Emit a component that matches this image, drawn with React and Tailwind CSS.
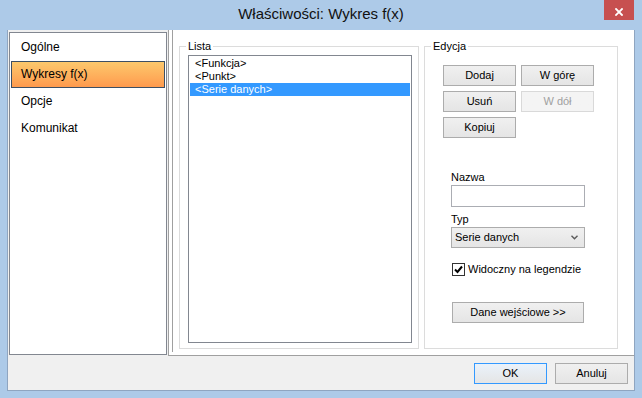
import React from "react";

const Btn = ({ children, className = "", disabled = false, focused = false }) => {
  let look = "border-[#acacac] from-[#f0f0f0] to-[#e5e5e5] text-black";
  if (disabled) look = "border-[#d9d9d9] from-[#f4f4f4] to-[#f4f4f4] text-[#a0a0a0]";
  if (focused) look = "border-[#3399ff] from-[#eaf2fb] to-[#e5e5e5] text-black";
  return (
    <div
      className={`flex h-[21px] w-[73px] items-center justify-center border bg-linear-to-b text-[11px] leading-[13px] ${look} ${className}`}
    >
      {children}
    </div>
  );
};

const menu = ["Ogólne", "Wykresy f(x)", "Opcje", "Komunikat"];
const series = ["<Funkcja>", "<Punkt>", "<Serie danych>"];

const App = () => {
  return (
    <div className="flex h-[398px] w-[642px] flex-col bg-[#adcae8] px-[7px] pb-[7px] font-['Liberation_Sans',Arial,sans-serif] text-black">
      {/* pasek tytułu */}
      <div className="grid h-[30px] grid-cols-[31px_1fr_31px]">
        <div />
        <div className="flex items-center justify-center pb-[1px] text-[15px] text-[#111]">Właściwości: Wykres f(x)</div>
        <div className="flex h-[20px] w-[30px] items-center justify-center bg-[#c75050] pt-[3px]">
          <svg width="8" height="8" viewBox="0 0 8 8">
            <path d="M1 1 L7 7 M7 1 L1 7" stroke="#fff" strokeWidth="1.8" strokeLinecap="square" />
          </svg>
        </div>
      </div>

      <div className="flex flex-1 flex-col border-x border-b border-[#8fa5c0] bg-[#f0f0f0]">
        <div className="flex h-[326px]">
          {/* menu po lewej */}
          <div className="ml-[1px] mt-[2px] flex h-[323px] w-[158px] flex-col border border-[#828790] bg-white p-[1px] text-[12px]">
            {menu.map((m, i) =>
              i === 1 ? (
                <div
                  key={m}
                  className="h-[27px] border border-[#3d4f63] bg-linear-to-b from-[#fcc86c] to-[#fe9a4e] pl-[9px] leading-[25px]"
                >
                  {m}
                </div>
              ) : (
                <div key={m} className="h-[27px] pl-[10px] leading-[27px]">
                  {m}
                </div>
              )
            )}
          </div>

          {/* panel po prawej */}
          <div className="ml-[1px] h-[326px] w-[466px] border-b border-l border-[#a0a0a0] bg-white pb-[3px] pl-[3px]">
            <div className="flex h-[322px] gap-[5px] border-l border-[#a0a0a0] pl-[6px] text-[11px] leading-[13px]">
              <fieldset className="mt-[10px] h-[309px] w-[240px] border border-[#dcdcdc] pl-[8px] pr-[6px] pt-[2px]">
                <legend className="-ml-[2px] px-[2px]">Lista</legend>
                <div className="h-[288px] w-[224px] border border-[#828790] p-[1px]">
                  {series.map((s, i) => (
                    <div
                      key={s}
                      className={`h-[13px] pl-[5px] leading-[13px] ${i === 2 ? "bg-[#3399ff] text-white" : ""}`}
                    >
                      {s}
                    </div>
                  ))}
                </div>
              </fieldset>

              <fieldset className="mt-[10px] flex h-[309px] w-[194px] flex-col border border-[#dcdcdc] pl-[8px]">
                <legend className="-ml-[2px] px-[2px]">Edycja</legend>
                <div className="ml-[10px] mt-[12px] flex gap-[5px]">
                  <Btn>Dodaj</Btn>
                  <Btn>W górę</Btn>
                </div>
                <div className="ml-[10px] mt-[5px] flex gap-[5px]">
                  <Btn>Usuń</Btn>
                  <Btn disabled>W dół</Btn>
                </div>
                <div className="ml-[10px] mt-[5px] flex">
                  <Btn>Kopiuj</Btn>
                </div>

                <div className="ml-[18px] mt-[33px] h-[13px]">Nazwa</div>
                <div className="ml-[18px] mt-[1px] h-[22px] w-[134px] border border-[#abadb3] bg-white" />

                <div className="ml-[18px] mt-[6px] h-[13px]">Typ</div>
                <div className="ml-[18px] mt-[1px] flex h-[21px] w-[134px] items-center justify-between border border-[#acacac] bg-linear-to-b from-[#f0f0f0] to-[#e5e5e5] pl-[3px] pr-[6px]">
                  <span>Serie danych</span>
                  <svg width="7" height="5" viewBox="0 0 7 5">
                    <path d="M0.5 0.8 L3.5 3.8 L6.5 0.8" fill="none" stroke="#5a5a5a" strokeWidth="1.4" />
                  </svg>
                </div>

                <div className="ml-[19px] mt-[15px] flex h-[13px] items-center gap-[3px]">
                  <div className="flex h-[13px] w-[13px] items-center justify-center border border-[#333] bg-white">
                    <svg width="9" height="9" viewBox="0 0 9 9">
                      <path d="M1 4.5 L3.5 7 L8 1.5" fill="none" stroke="#000" strokeWidth="2" />
                    </svg>
                  </div>
                  <span>Widoczny na legendzie</span>
                </div>

                <div className="ml-[19px] mt-[26px] flex">
                  <Btn className="w-[132px]">Dane wejściowe &gt;&gt;</Btn>
                </div>
              </fieldset>
            </div>
          </div>
        </div>

        {/* przyciski na dole */}
        <div className="flex h-[34px] items-start justify-end gap-[8px] pr-[6px] pt-[7px]">
          <Btn focused>OK</Btn>
          <Btn>Anuluj</Btn>
        </div>
      </div>
    </div>
  );
};

export default App;
